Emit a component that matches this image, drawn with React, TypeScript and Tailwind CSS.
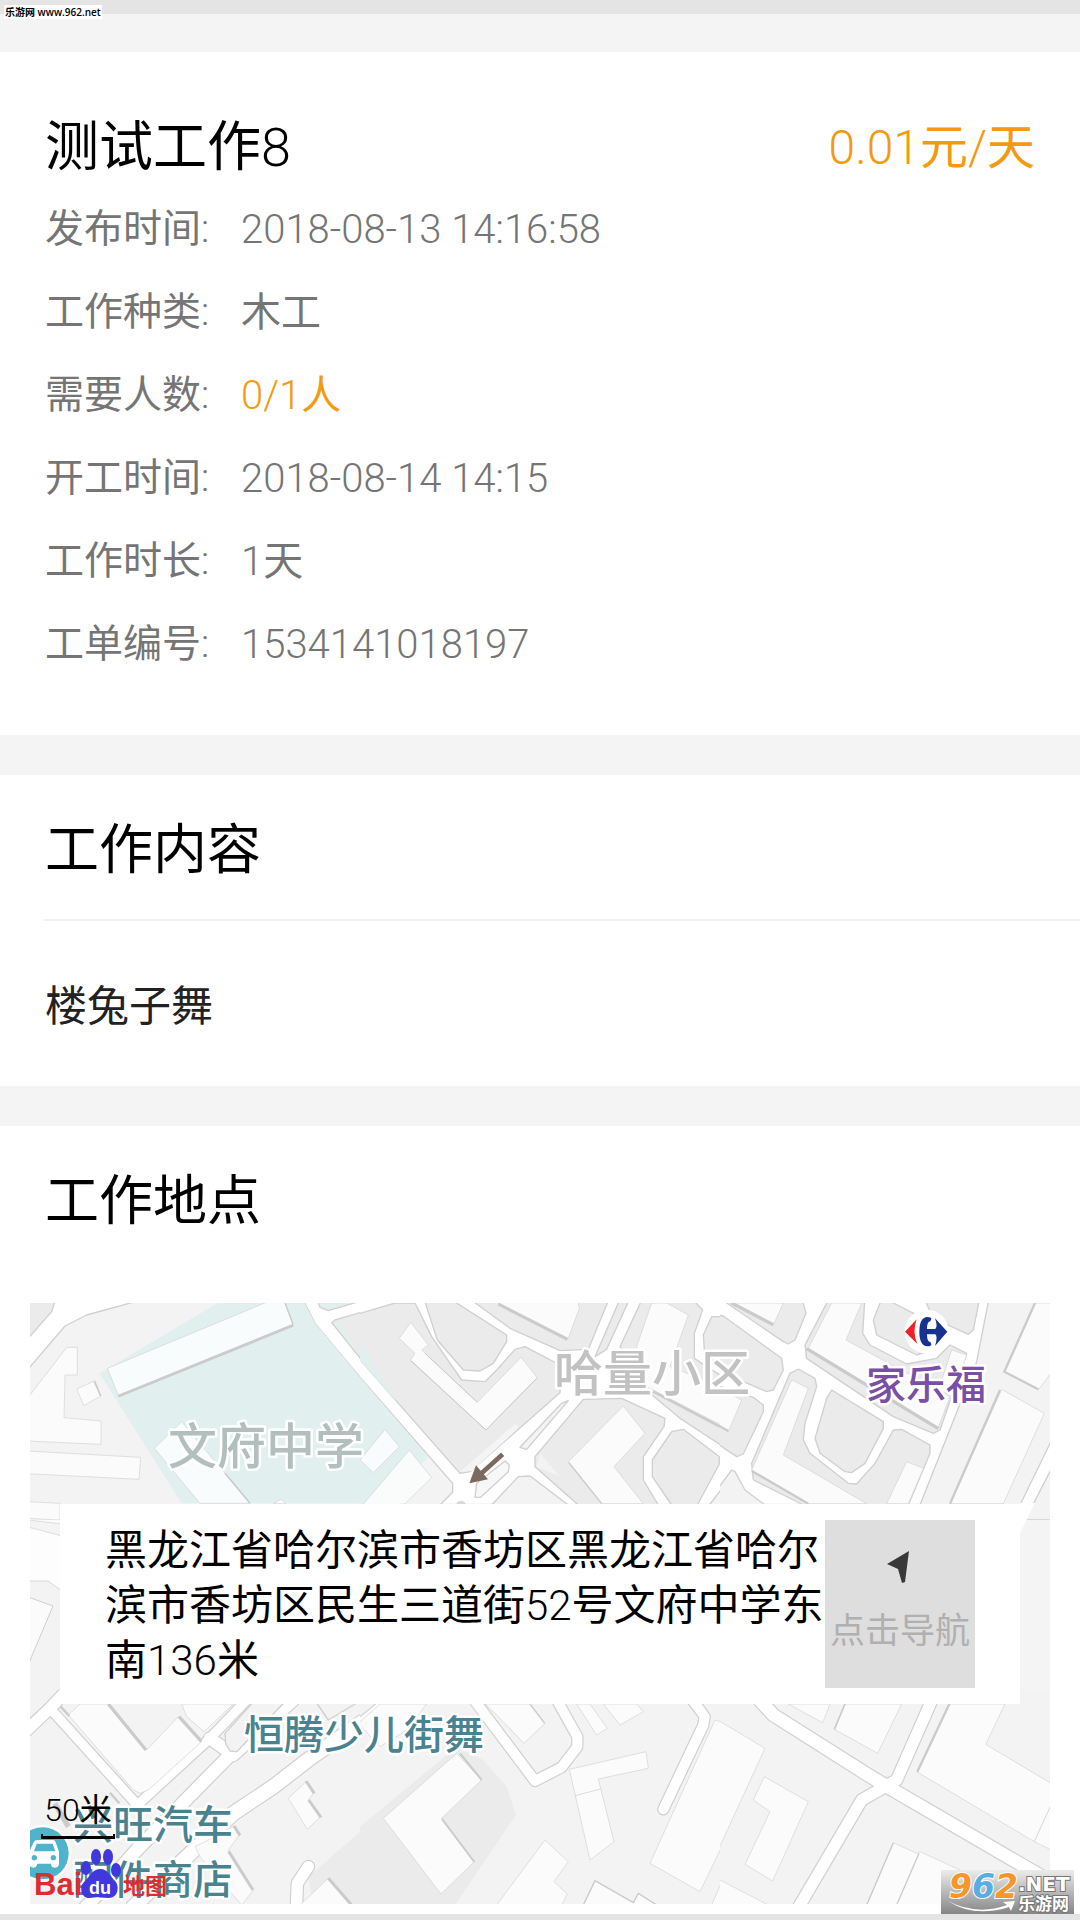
import React from 'react';

const details = [
  { label: '发布时间', value: '2018-08-13 14:16:58' },
  { label: '工作种类', value: '木工' },
  { label: '需要人数', value: '0/1人', highlight: true },
  { label: '开工时间', value: '2018-08-14 14:15' },
  { label: '工作时长', value: '1天' },
  { label: '工单编号', value: '1534141018197' },
];

type ShapeProps = { points: string; fill?: string };

const Block: React.FC<ShapeProps> = ({ points, fill = '#ebebeb' }) => (
  <polygon points={points} fill={fill} stroke="#d0d0d0" strokeWidth="4" strokeLinejoin="round" />
);

const Building: React.FC<ShapeProps> = ({ points, fill = '#fbfbfb' }) => (
  <polygon points={points} fill={fill} stroke="#d2d2d2" strokeWidth="2" />
);

const Shade: React.FC<{ d: string; width?: number }> = ({ d, width = 7 }) => (
  <path d={d} fill="none" stroke="#cbcbcb" strokeWidth={width} />
);

// All the outlines go first so that crossings stay open
const Roads: React.FC<{ lines: { d: string; width: number }[] }> = ({ lines }) => (
  <g fill="none" strokeLinejoin="round" strokeLinecap="round">
    {lines.map((line) => (
      <path key={line.d} d={line.d} stroke="#d0d0d0" strokeWidth={line.width + 7} />
    ))}
    {lines.map((line) => (
      <path key={line.d} d={line.d} stroke="#ffffff" strokeWidth={line.width} />
    ))}
  </g>
);

// Each tile is 360x230 on the map and drawn on a 1080x690 grid
const Tile: React.FC<{ x: number; y: number; children: React.ReactNode }> = ({ x, y, children }) => (
  <svg x={x} y={y} width="360" height="230" viewBox="0 0 1080 690">
    {children}
  </svg>
);

const MapDrawing: React.FC = () => (
  <svg
    className="absolute inset-0 w-full h-full"
    viewBox="0 0 1020 601"
    preserveAspectRatio="xMidYMid slice"
    fontFamily='"Noto Sans CJK SC", sans-serif'
    aria-hidden="true"
  >
    <rect width="1020" height="601" fill="#f4f4f4" />

    {/* Edges beside the address card */}
    <polygon points="-2,203 32,206 32,221 -2,217" fill="#fbfbfb" stroke="#dddddd" />
    <polygon points="-2,224 32,233 32,600 -2,600" fill="#fdfdfd" stroke="#dddddd" />
    <polygon points="-2,278 18,278 32,288 32,383 18,403 -2,403" fill="#f3f3f3" stroke="#d8d8d8" />
    <polygon points="-2,294 23,303 -2,362" fill="#fbfbfb" stroke="#cfcfcf" />

    <Tile x={-30} y={-13}>
      <rect width="1080" height="640" fill="#ffffff" />
      <Block points="80,20 170,20 155,65 80,150" />
      <Block points="80,243 195,108 260,75 460,20 905,20 945,100 1090,274 1090,700 80,700" fill="#f3f3f3" />
      <polygon points="685,20 905,20 945,100 1090,274 1090,640 545,640 298,250" fill="#e1f0ee" />
      <Building points="322,235 840,20 850,20 878,103 355,316" fill="#f8fcfd" />
      <Shade d="M355 319L880 106" width={8} />
      <Shade d="M855 39L879 103" width={4} />
      <Building points="80,328 200,172 232,172 232,255 195,255 192,383 303,393 303,463 80,453" />
      <Building points="230,297 285,272 302,318 252,347" />
      <Shade d="M283 274L302 318" width={5} />
      <Building points="80,483 422,502 417,568 80,551" />
      <Building points="80,635 180,640 180,690 80,685" />
      <Building points="463,475 545,395 750,640 600,640" fill="#f8fcfd" />
      <Shade d="M675 550L750 640" width={5} />
      <Building points="820,641 843,628 858,641" />
      <Block points="948,20 960,52 985,62 1120,22" fill="#e1efed" />
      <Block points="995,98 1005,90 1090,65 1090,216" />
      <polygon points="1000,100 1020,95 1078,198" fill="#e1efed" />
    </Tile>

    <Tile x={330} y={-13}>
      <rect width="1080" height="640" fill="#ffffff" />
      <Block points="-10,250 278,580 278,607 240,645 -10,645" fill="#f3f3f3" />
      <polygon points="0,262 205,500 60,641 0,641" fill="#e1f0ee" />
      <Building points="0,510 75,418 118,470 40,548" fill="#f8fcfd" />
      <Building points="-5,660 148,480 215,563 135,641" fill="#fafcfc" />
      <Block points="-10,73 105,39 165,39 215,140 305,270 375,275 410,240 465,178 495,170 600,225 600,308 330,545 300,550 -10,198" />
      <polygon points="0,155 110,335 0,211" fill="#e1f0ee" />
      <polygon points="300,545 465,402 478,412 335,543" fill="#f4f4f4" />
      <Building points="118,145 152,97 205,165 185,180 352,337 483,202 532,263 378,420 152,210 165,190" />
      <Shade d="M195 190L352 337M152 212L378 420L532 263" width={3} />
      <Block points="190,20 260,20 440,135 440,155 400,220 360,243 310,240 232,150" />
      <Block points="320,20 750,20 685,178 600,182 450,115" />
      <Building points="400,20 650,20 658,55 625,145 420,45" />
      <Shade d="M415 42L622 148" width={9} />
      <Block points="783,20 812,20 740,178 705,200" />
      <Block points="850,20 990,20 1028,60 1003,130 1003,205 1090,262 1090,470 960,385 870,310 780,170" />
      <Building points="875,39 920,39 985,75 930,230 1085,290 1085,406 860,290 830,170" />
      <Shade d="M880 305L1080 410" width={8} />
      <Block points="1090,80 1055,80 1030,135 1035,210 1090,240" />
      <Block points="480,472 605,340 625,332 500,478" fill="#f3f3f3" />
      <Block points="670,328 785,325 915,385 912,410 850,500 850,570 895,645 655,645 525,530 525,500" />
      <polygon points="540,490 600,560 530,530" fill="#f3f3f3" />
      <Building points="625,515 790,348 855,430 762,530 850,641 725,641" />
      <Shade d="M626 517L725 641" width={4} />
      <Block points="395,645 475,560 510,558 625,645" fill="#f3f3f3" />
      <Block points="345,622 350,580 435,513 448,525 445,545 362,622" fill="#f7f7f7" />
      <Block points="935,425 970,418 1078,500 1078,522 1012,645 935,645 877,560 877,510" />
      <Block points="1090,590 1048,645 1090,645" fill="#f3f3f3" />
      <path d="M428 493L362 552" stroke="#7b6a60" strokeWidth="14" />
      <polygon points="328,580 348,526 384,568" fill="#7b6a60" />
      <circle cx="303" cy="648" r="16" fill="#d9d9d9" />
    </Tile>

    <Tile x={690} y={-13}>
      <rect width="1080" height="640" fill="#ffffff" />
      <Block points="0,20 245,20 258,70 225,150 205,162 190,155 20,39" />
      <Building points="30,39 190,39 160,105" />
      <Shade d="M35 39L160 104" width={10} />
      <Block points="-10,75 10,78 185,205 190,240 160,300 140,305 -10,240" />
      <Block points="-10,285 100,322 130,345 130,365 70,492 50,500 -10,460" />
      <Building points="-10,290 65,330 25,425 -10,406" />
      <Shade d="M-5 406L25 423" />
      <Block points="-10,600 35,540 45,545 75,600 135,645 -10,645" fill="#f3f3f3" />
      <Block points="330,20 435,20 428,130 450,165 560,222 650,205 690,165 740,190 660,420 640,430 520,380 260,205 255,165" />
      <Building points="335,39 425,39 378,150 690,320 655,412 265,175" />
      <Shade d="M260 176L655 416" width={10} />
      <Building points="695,180 740,195 700,320 655,300" />
      <Block points="488,20 520,39 640,100 620,185 590,195 470,135 460,90" />
      <Block points="610,20 780,20 760,120 745,133 640,85" />
      <Block points="235,237 285,265 290,290 255,400 250,450 270,490 385,580 410,582 465,520 520,420 545,418 630,465 630,490 565,645 250,645 100,570 95,520 210,250" />
      <Building points="215,270 265,295 190,495 440,641 265,641 95,540" />
      <Shade d="M95 543L265 641" />
      <Building points="560,515 610,535 565,641 500,641" />
      <Block points="335,300 490,395 490,415 435,520 395,548 375,545 300,490 285,445 320,325" />
      <Block points="808,20 1000,20 1000,440 900,645 600,645 770,215" fill="#f3f3f3" />
      <Building points="945,39 1000,39 1000,240 955,300 853,245" />
      <Shade d="M945 39L853 245L955 298" />
      <Building points="845,298 973,370 850,641 690,641" />
      <Shade d="M840 300L690 641" />
      <Block points="1000,525 915,690 1000,690" fill="#f3f3f3" />
      <circle cx="620" cy="125" r="66" fill="#ffffff" />
      <path d="M590 88L555 125L592 162Q576 125 590 88Z" fill="#ee2128" />
      <path
        d="M634 86Q634 81 622 81Q598 83 598 125Q598 167 622 169Q634 169 634 163L631 156Q621 156 621 133L646 133Q654 140 645 168L682 125L645 85Q654 110 646 117L621 117Q621 94 631 94Z"
        fill="#17318f"
      />
    </Tile>

    <Tile x={-30} y={387}>
      <rect width="1080" height="690" fill="#f3f3f3" />
      <polygon points="925,560 1080,425 1080,645 940,645" fill="#ebebeb" />
      <Roads
        lines={[
          { d: 'M60 140L150 55L230 -30', width: 34 },
          { d: 'M150 55L412 345L630 145L740 30', width: 28 },
          { d: 'M630 145L700 195L880 30', width: 36 },
          { d: 'M690 195L410 480L250 660', width: 38 },
          { d: 'M1110 80L930 205L820 290L700 370L400 650', width: 42 },
        ]}
      />
      <Building points="205,75 240,42 325,42 440,180 535,80 605,155 445,300 420,310 400,300" />
      <Shade d="M325 42L438 180M537 80L604 154" width={10} />
      <Shade d="M182 50L208 78M330 308L358 340" />
      <Building points="545,42 700,42 612,125 560,80" />
      <Block points="675,130 765,30 860,30 710,185 690,183 677,160" fill="#f3f3f3" />
      <Block points="950,39 1070,39 985,90" fill="#f3f3f3" />
      <Building points="865,325 918,275 940,310 925,330 962,380 922,418" />
      <Shade d="M918 273L943 310M926 330L963 382" width={9} />
      <Building points="585,470 615,455 700,410 718,435 685,480 760,600 725,645 600,500" />
      <Shade d="M702 408L720 436M686 484L759 600" width={9} />
      <Roads lines={[{ d: 'M925 530L892 580L888 690', width: 34 }]} />
      <Building points="900,645 985,565 1050,645" />
      <Shade d="M985 565L1055 645" width={9} />
      <Shade d="M165 340L205 410" width={16} />
      <circle cx="128" cy="490" r="86" fill="#ffffff" />
      <circle cx="128" cy="490" r="78" fill="#4fb3cb" />
      <path d="M112 450h46q7 0 9 7l10 28v34q0 14-12 14t-12-12H112q-2 12-12 12t-12-12v-36l13-28q3-7 11-7z" fill="#ffffff" />
      <path d="M110 461h48l8 23h-64z" fill="#4fb3cb" />
      <circle cx="103" cy="503" r="8" fill="#4fb3cb" />
      <circle cx="160" cy="503" r="8" fill="#4fb3cb" />
    </Tile>

    <Tile x={330} y={387}>
      <rect width="1080" height="690" fill="#f3f3f3" />
      <polygon points="0,410 290,170 370,210 440,290 468,375 285,645 0,645" fill="#ebebeb" />
      <Roads
        lines={[
          { d: 'M-30 120L80 30', width: 20 },
          { d: 'M335 20L525 273L605 232L652 170L652 140L585 20', width: 30 },
          { d: 'M990 20L1034 80L1030 105L910 358', width: 30 },
        ]}
      />
      <Building points="-5,100 60,42 200,42 140,120 60,170" />
      <Building points="70,385 290,190 365,270 245,385 343,515 243,612" />
      <Shade d="M300 190L365 270M246 387L343 516" width={6} />
      <Building points="375,42 510,42 555,100 492,160 400,65" />
      <Shade d="M510 42L554 100" width={4} />
      <Building points="650,42 690,42 742,115 710,135" />
      <Building points="730,42 830,42 850,65 780,105" />
      <Building points="628,238 858,185 865,235 715,267 762,455 690,510" />
      <path d="M645 317L722 297" stroke="#cccccc" strokeWidth="2" />
      <Building points="1065,90 1090,98 1090,460 1020,605 870,520" />
      <Building points="410,645 555,450 625,515 582,575 622,612 605,645" />
      <Building points="670,645 705,572 820,638 835,610 890,645" />
      <Shade d="M670 645L705 572L820 638L835 610L890 645" width={4} />
      <Building points="1055,645 1090,565 1090,645" />
    </Tile>

    <Tile x={690} y={387}>
      <rect width="1080" height="690" fill="#f3f3f3" />
      <Roads
        lines={[
          { d: 'M640 20L530 270L425 330L225 670', width: 34 },
          { d: 'M110 20L160 75L465 268L540 312L1060 615', width: 38 },
        ]}
      />
      <Building points="-10,88 135,175 -10,490" />
      <Building points="133,260 265,335 158,573 75,523 150,365 100,330" />
      <Building points="205,42 330,42 308,98" />
      <Building points="375,42 545,42 473,190 343,118" />
      <Shade d="M375 42L343 118" width={5} />
      <Building points="690,42 855,42 797,163 1000,284 1000,330 943,455 590,245" />
      <Shade d="M688 42L592 245" />
      <Building points="943,455 1000,330 1000,483" />
      <Building points="520,458 590,490 600,485 720,540 800,645 440,645" />
      <Shade d="M520 458L440 645M597 490L530 645" width={4} />
      <Building points="-10,565 145,645 -10,645" />
    </Tile>

    <polygon points="990,200 1005,200 990,230" fill="#ffffff" />

    <g fontWeight="500" stroke="#ffffff" strokeWidth="5" paintOrder="stroke" strokeLinejoin="round">
      <g fontSize="49">
        <text x="138" y="161" fill="#b3bfbd">文府中学</text>
        <text x="524" y="88" fill="#c2c2c2">哈量小区</text>
      </g>
      <g fontSize="40">
        <text x="836" y="96" fill="#7a4fa6">家乐福</text>
        <text x="214" y="446" fill="#4a8390">恒腾少儿街舞</text>
        <text x="43" y="536" fill="#4a8390">兴旺汽车</text>
        <text x="43" y="591" fill="#4a8390">配件商店</text>
      </g>
    </g>

    {/* Baidu logo */}
    <g fontWeight="700" fontFamily='"Liberation Sans", "Noto Sans CJK SC", sans-serif'>
      <text x="4" y="592" fontSize="31" fill="#dc2d32">Bai</text>
      <g fill="#4038dc">
        <ellipse cx="56" cy="565" rx="5" ry="7" />
        <ellipse cx="66" cy="554" rx="5" ry="8" />
        <ellipse cx="78" cy="554" rx="5" ry="8" />
        <ellipse cx="86" cy="567" rx="5" ry="7" />
        <path d="M70 566c8 0 11 8 15 12 5 5 3 17-6 17-4 0-6-1-10-1s-6 1-10 1c-8 0-10-11-5-16 5-4 8-13 16-13z" />
      </g>
      <text x="59" y="591" fontSize="18" fill="#ffffff">du</text>
      <text x="93" y="591" fontSize="22" fill="#dc2d32">地图</text>
    </g>
  </svg>
);

const SectionTitle: React.FC<{ children: React.ReactNode }> = ({ children }) => (
  <h2 className="px-[45px] pt-2 text-[54px] leading-[136px] text-black">{children}</h2>
);

const SiteBadge: React.FC = () => (
  <svg
    className="absolute right-[6px] bottom-0 w-[133px] h-[44px] overflow-visible"
    viewBox="0 0 133 44"
    role="img"
    aria-label="962.NET 乐游网"
  >
    <defs>
      <linearGradient id="badge" x1="0" y1="0" x2="0" y2="1">
        <stop offset="0" stopColor="#ececec" />
        <stop offset="1" stopColor="#858585" />
      </linearGradient>
    </defs>
    <rect width="133" height="44" fill="url(#badge)" />
    <text
      x="8"
      y="28"
      fontSize="33"
      fontFamily='"DejaVu Sans", sans-serif'
      fontWeight="700"
      fontStyle="italic"
      fill="#f7962a"
      stroke="#ffffff"
      strokeWidth="2"
      paintOrder="stroke"
    >
      9<tspan fill="#5aade2">6</tspan>2
    </text>
    <g fill="#ffffff" stroke="#777777" strokeWidth="2" paintOrder="stroke" fontWeight="700">
      <text x="77" y="21" fontSize="20" fontFamily='"DejaVu Sans", sans-serif'>.NET</text>
      <text x="77" y="40" fontSize="17" fontFamily='"Noto Sans CJK SC", sans-serif'>乐游网</text>
    </g>
    <path d="M7 31Q36 46 66 35L62 32L74 31L70 41L68 37Q33 48 7 31Z" fill="#ffffff" />
  </svg>
);

const App: React.FC = () => {
  return (
    <div
      lang="zh-CN"
      className="relative w-full bg-white font-normal font-['Roboto_Light',Roboto,'Noto_Sans_CJK_SC',sans-serif] border-b-[6px] border-[#e4e4e4]"
    >
      <header className="h-[52px] bg-[#f4f4f4] border-t-[14px] border-[#e4e4e4]">
        <span className="absolute left-[4px] top-[5px] bg-white px-px text-[10px] leading-[14px] font-semibold text-black font-['Open_Sans','Noto_Sans_CJK_SC',sans-serif]">
          乐游网 www.962.net
        </span>
      </header>

      {/* Job summary */}
      <section className="px-[45px] pt-14 pb-[49px]">
        <div className="flex justify-between items-center h-20 text-black">
          <h1 className="text-[54px] leading-[80px]">测试工作8</h1>
          <p className="text-[48px] leading-[76px] text-[#f39a10]">0.01元/天</p>
        </div>
        <dl className="text-[39px] leading-[83px] text-[#757575]">
          {details.map((item) => (
            <div key={item.label} className="flex h-[83px]">
              <dt className="w-[196px]">{item.label}:</dt>
              <dd className={item.highlight ? 'text-[40px] text-[#f39a10]' : 'text-[40px]'}>{item.value}</dd>
            </div>
          ))}
        </dl>
      </section>

      {/* Job content */}
      <section className="border-t-[40px] border-[#f4f4f4]">
        <SectionTitle>工作内容</SectionTitle>
        <p className="ml-[44px] border-t-2 border-[#f0f0f0] pl-px pt-[43px] pb-[36px] text-[42px] leading-[86px] text-[#222222]">
          楼兔子舞
        </p>
      </section>

      {/* Job location */}
      <section className="border-t-[40px] border-[#f4f4f4] pb-[10px]">
        <SectionTitle>工作地点</SectionTitle>
        <div className="relative mx-[30px] mt-[33px] px-[30px] pt-[201px] pb-[200px]">
          <MapDrawing />
          <div className="relative flex items-start min-h-[200px] bg-white pl-[45px] pr-[45px] pt-4">
            <p className="flex-1 pt-[3px] text-[42px] leading-[55px] text-black">
              黑龙江省哈尔滨市香坊区黑龙江省哈尔滨市香坊区民生三道街52号文府中学东南136米
            </p>
            <button className="flex flex-col items-center w-[150px] h-[168px] shrink-0 bg-[#dedede] pt-7 text-[35px] leading-[56px] text-[#b0b0b0]">
              <svg className="w-10 h-10 mb-4" viewBox="0 0 40 40" aria-hidden="true">
                <path d="M29 3L7 16L18 21L22 35L25 34Z" fill="#383838" />
              </svg>
              <span className="whitespace-nowrap">点击导航</span>
            </button>
          </div>
          <div className="absolute left-[11px] bottom-[65px] w-[74px] text-center text-[32px] leading-[40px] text-black">
            50米
            <div className="h-[5px] mt-1 border-b-[3px] border-x-2 border-black" />
          </div>
        </div>
      </section>

      <SiteBadge />
    </div>
  );
};

export default App;
